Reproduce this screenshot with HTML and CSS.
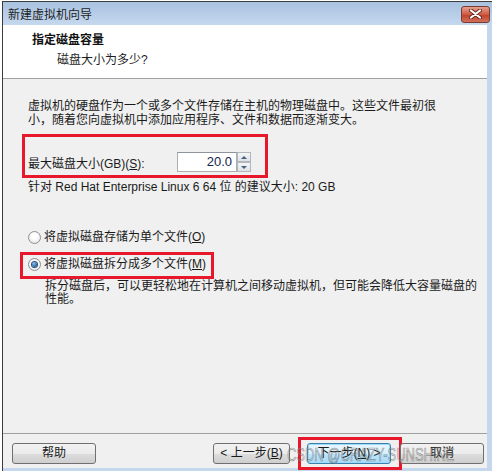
FILE: index.html
```html
<!DOCTYPE html>
<html lang="zh-CN">
<head>
  <meta charset="UTF-8">
  <meta name="viewport" content="width=device-width, initial-scale=1.0">
  <title>新建虚拟机向导</title>
  <link rel="stylesheet" href="styles.css">
</head>
<body>
  <div class="window">
    <div class="titlebar">
      <span class="title">新建虚拟机向导</span>
      <button class="close-btn" aria-label="关闭">
        <svg width="13" height="10" viewBox="0 0 13 10">
          <path d="M2 1.5 L11 8.5 M11 1.5 L2 8.5" stroke="#6b2a22" stroke-width="4" stroke-linecap="round"/>
          <path d="M2 1.5 L11 8.5 M11 1.5 L2 8.5" stroke="#ffffff" stroke-width="2.2" stroke-linecap="round"/>
        </svg>
      </button>
    </div>

    <div class="client">
      <div class="header">
        <div class="header-title">指定磁盘容量</div>
        <div class="header-sub">磁盘大小为多少?</div>
      </div>

      <div class="content">
        <p class="intro">虚拟机的硬盘作为一个或多个文件存储在主机的物理磁盘中。这些文件最初很<br>小，随着您向虚拟机中添加应用程序、文件和数据而逐渐变大。</p>

        <div class="mark size-box">
          <div class="size-row">
            <span class="size-label">最大磁盘大小(GB)(<u>S</u>):</span>
            <div class="spin">
              <div class="spin-input">20.0</div>
              <div class="spin-btns">
                <span class="spin-btn"><i class="tri-up"></i></span>
                <span class="spin-btn"><i class="tri-down"></i></span>
              </div>
            </div>
          </div>
        </div>

        <p class="recommend">针对 Red Hat Enterprise Linux 6 64 位 的建议大小: 20 GB</p>

        <div class="radio first"><span class="dot"></span>将虚拟磁盘存储为单个文件(<u>O</u>)</div>

        <div class="mark radio-box">
          <div class="radio"><span class="dot checked"></span>将虚拟磁盘拆分成多个文件(<u>M</u>)</div>
        </div>

        <p class="desc">拆分磁盘后，可以更轻松地在计算机之间移动虚拟机，但可能会降低大容量磁盘的<br>性能。</p>
      </div>

      <div class="footer">
        <button class="btn help">帮助</button>
        <button class="btn back">&lt; 上一步(<u>B</u>)</button>
        <div class="mark next-box">
          <button class="btn next">下一步(<u>N</u>) &gt;</button>
        </div>
        <button class="btn cancel">取消</button>
      </div>
    </div>

    <div class="watermark">CSDN @CRAZY-SUNSHINE</div>
  </div>
</body>
</html>
```

FILE: styles.css
```css
body { margin: 0; background: #fff; font-family: "Liberation Sans", "Noto Sans CJK SC", sans-serif; font-size: 12px; color: #1a1a1a; }
u { text-decoration: underline; text-underline-offset: 1px; }

.window { position: relative; margin: 1px 0 0 2px; width: 490px; height: 470px; box-sizing: border-box; border-top: 1px solid #3c3c3c; border-left: 1px solid #3c3c3c; background: #c4d7ed; display: flex; flex-direction: column; }

.titlebar { height: 23px; flex: none; display: flex; align-items: center; justify-content: space-between; padding: 0 2px 0 5px; background: linear-gradient(#a8c2e0, #c5d8ee); }
.title { font-size: 12px; color: #1e1e1e; }
.close-btn { width: 29px; height: 17px; margin-top: 1px; padding: 0; border: 1px solid #7a3b33; border-radius: 3px; background: linear-gradient(#e4a08f, #cf5a44 50%, #c1402c 51%, #d0715a); display: flex; align-items: center; justify-content: center; }

.client { flex: 1; margin: 0 5px 3px 0; display: flex; flex-direction: column; background: #f0f0f0; }

.header { height: 54px; flex: none; background: #fff; border-bottom: 1px solid #a0a0a0; padding: 7px 0 0 29px; box-sizing: border-box; }
.header-title { font-weight: bold; font-size: 12px; line-height: 16px; color: #111; }
.header-sub { margin: 4px 0 0 25px; line-height: 16px; color: #1e1e1e; }

.content { flex: 1; padding: 0 25px; }
.intro { margin: 20px 0 0; line-height: 14px; white-space: nowrap; }

.mark { border: 3px solid #e8182c; }
.size-box { margin: 7px 0 0 -6px; width: 246px; box-sizing: border-box; padding: 15px 14px 3px 3px; }
.size-row { display: flex; align-items: center; justify-content: space-between; height: 20px; }
.spin { display: flex; height: 20px; }
.spin-input { width: 60px; box-sizing: border-box; border: 1px solid #abadb3; border-top-color: #8e949c; background: #fff; text-align: right; padding-right: 4px; font-size: 13px; line-height: 18px; color: #15244c; }
.spin-btns { width: 14px; display: flex; flex-direction: column; }
.spin-btn { flex: 1; box-sizing: border-box; border: 1px solid #b2b6bd; background: linear-gradient(#f4f5f7, #dde1e7); display: flex; align-items: center; justify-content: center; }
.tri-up { width: 0; height: 0; border-left: 3px solid transparent; border-right: 3px solid transparent; border-bottom: 3px solid #4a5d80; }
.tri-down { width: 0; height: 0; border-left: 3px solid transparent; border-right: 3px solid transparent; border-top: 3px solid #4a5d80; }

.recommend { margin: 2px 0 0; line-height: 14px; }

.radio { display: flex; align-items: center; line-height: 16px; }
.radio.first { margin-top: 35px; }
.dot { width: 13px; height: 13px; box-sizing: border-box; border-radius: 50%; border: 1px solid #8f9094; background: radial-gradient(circle at 50% 40%, #ffffff 30%, #e0e0e0 90%); margin-right: 3px; display: flex; align-items: center; justify-content: center; }
.dot.checked::after { content: ""; width: 5px; height: 5px; border-radius: 50%; background: radial-gradient(circle at 40% 35%, #8fc3ea, #1d5c99 70%); box-shadow: 0 0 0 1px #2a4f7d; }
.radio-box { display: inline-block; margin: 7px 0 0 -8px; padding: 1px 5px 4px 5px; }

.desc { margin: 1px 0 0 17px; line-height: 13px; white-space: nowrap; }

.footer { height: 35px; flex: none; box-sizing: border-box; border-top: 1px solid #a0a0a0; display: flex; align-items: flex-start; padding: 9px 3px 0 9px; }
.btn { height: 21px; box-sizing: border-box; padding: 0; border: 1px solid #707070; border-radius: 3px; background: linear-gradient(#f2f2f2, #ebebeb 50%, #dddddd 51%, #cfcfcf); font-family: "Liberation Sans", "Noto Sans CJK SC", sans-serif; font-size: 12px; color: #1a1a1a; line-height: 17px; }
.help { width: 84px; }
.back { width: 77px; margin-left: auto; }
.next-box { margin: -6px -2px -6px 8px; padding: 3px 8px 3px 6px; }
.next { width: 84px; display: block; border-color: #3c7fb1; box-shadow: inset 0 0 0 1px #9ddcf6; background: linear-gradient(#eaf6fd, #d9f0fc 50%, #bee6fd 51%, #a7d9f5); }
.cancel { width: 84px; }

.watermark { position: absolute; left: 284px; top: 443px; font-family: "Liberation Sans", sans-serif; font-size: 18px; letter-spacing: 0; color: rgba(200, 200, 200, 0.3); -webkit-text-stroke: 0.7px rgba(80, 80, 80, 0.55); transform: scaleX(0.72); transform-origin: left center; pointer-events: none; white-space: nowrap; }
```
